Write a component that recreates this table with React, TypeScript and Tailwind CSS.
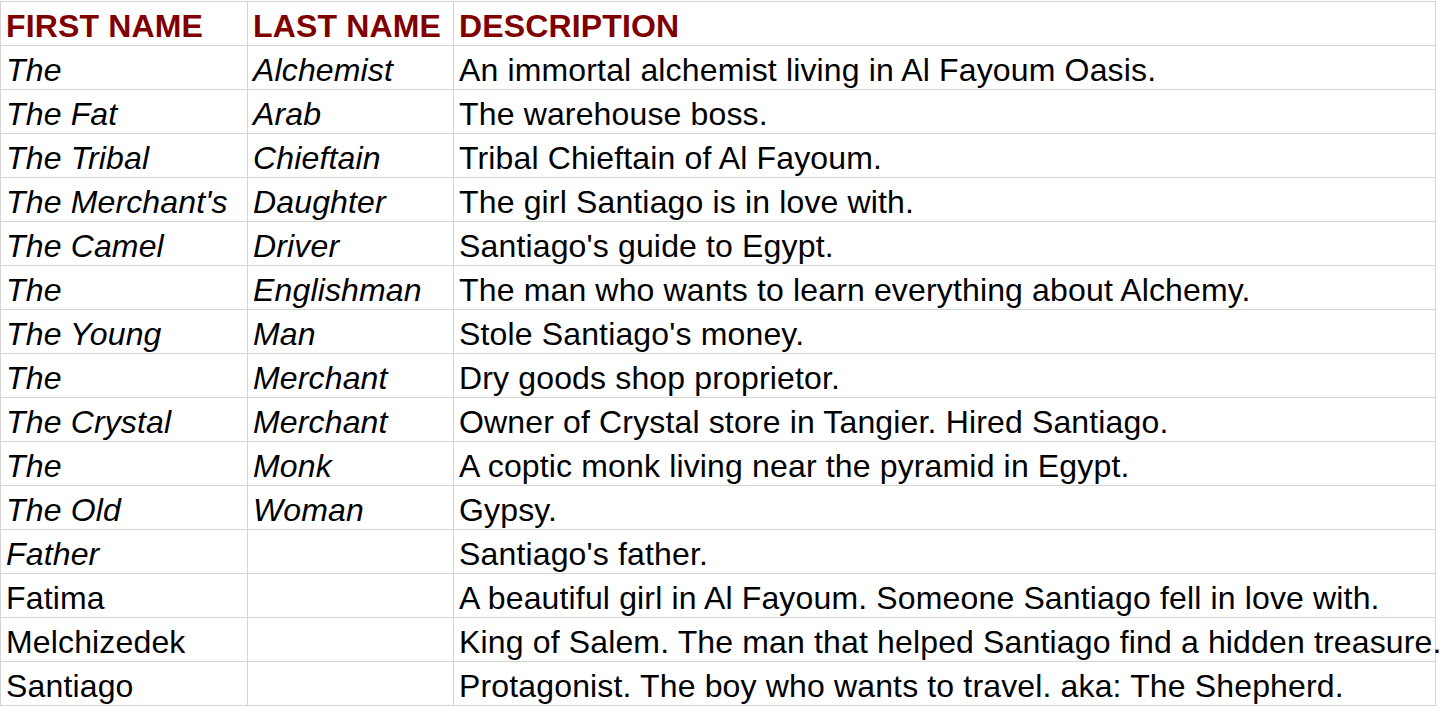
const rows: [string, string, string, boolean][] = [
  ["The", "Alchemist", "An immortal alchemist living in Al Fayoum Oasis.", true],
  ["The Fat", "Arab", "The warehouse boss.", true],
  ["The Tribal", "Chieftain", "Tribal Chieftain of Al Fayoum.", true],
  ["The Merchant's", "Daughter", "The girl Santiago is in love with.", true],
  ["The Camel", "Driver", "Santiago's guide to Egypt.", true],
  ["The", "Englishman", "The man who wants to learn everything about Alchemy.", true],
  ["The Young", "Man", "Stole Santiago's money.", true],
  ["The", "Merchant", "Dry goods shop proprietor.", true],
  ["The Crystal", "Merchant", "Owner of Crystal store in Tangier. Hired Santiago.", true],
  ["The", "Monk", "A coptic monk living near the pyramid in Egypt.", true],
  ["The Old", "Woman", "Gypsy.", true],
  ["Father", "", "Santiago's father.", true],
  ["Fatima", "", "A beautiful girl in Al Fayoum. Someone Santiago fell in love with.", false],
  ["Melchizedek", "", "King of Salem. The man that helped Santiago find a hidden treasure.", false],
  ["Santiago", "", "Protagonist. The boy who wants to travel. aka: The Shepherd.", false],
]

const cell =
  "h-[44px] flex items-end pl-[5px] pb-[3px] border-r border-b border-[#d4d4d4] whitespace-nowrap text-[32px] leading-none tracking-[0.15px]"

export default function App() {
  return (
    <div
      className="w-[1439px] h-[707px] overflow-hidden bg-white text-black pt-[1px]"
      style={{ fontFamily: '"Liberation Sans", Arial, sans-serif' }}
    >
      <div className="grid grid-cols-[247px_206px_982px] border-l border-t border-[#d4d4d4] w-[1436px]">
        <div className={`${cell} font-bold text-[#800000]`}>FIRST NAME</div>
        <div className={`${cell} font-bold text-[#800000]`}>LAST NAME</div>
        <div className={`${cell} font-bold text-[#800000]`}>DESCRIPTION</div>
        {rows.map(([first, last, desc, italic], i) => (
          <div key={i} className="contents">
            <div className={`${cell} ${italic ? "italic" : ""}`}>{first}</div>
            <div className={`${cell} italic`}>{last}</div>
            <div className={cell}>{desc}</div>
          </div>
        ))}
      </div>
    </div>
  )
}
